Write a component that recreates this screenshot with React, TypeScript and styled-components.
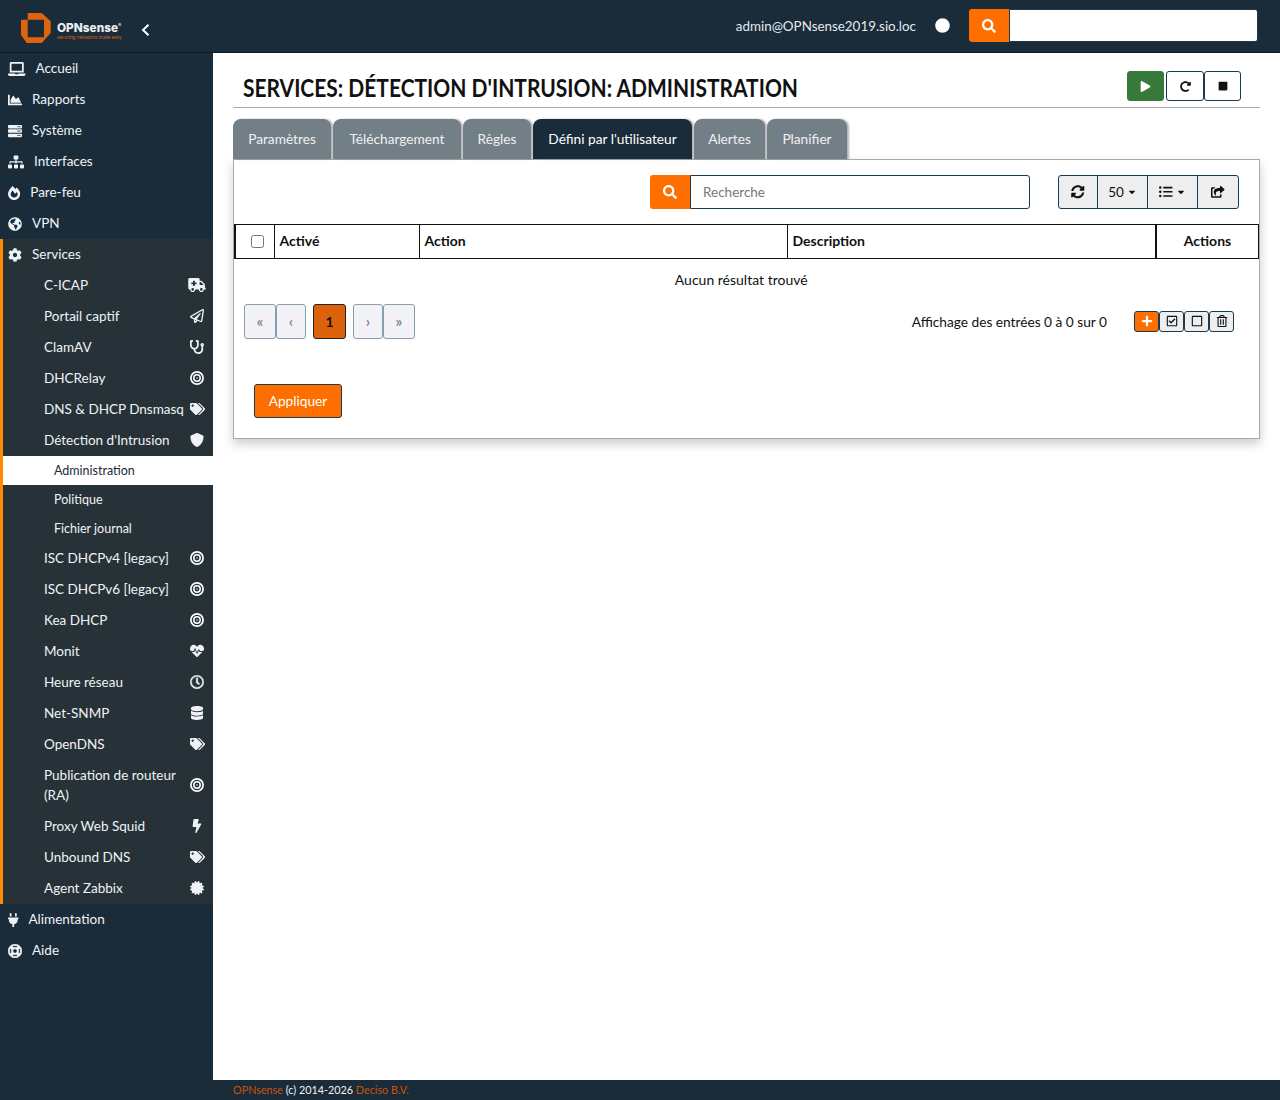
import React from "react";
import styled, { createGlobalStyle } from "styled-components";
import {
	FaLaptop,
	FaChartArea,
	FaServer,
	FaSitemap,
	FaFireAlt,
	FaGlobeAmericas,
	FaCog,
	FaAmbulance,
	FaRegPaperPlane,
	FaStethoscope,
	FaTags,
	FaHeartbeat,
	FaRegClock,
	FaDatabase,
	FaBolt,
	FaCertificate,
	FaPlug,
	FaRegLifeRing,
	FaSearch,
	FaPlay,
	FaRedoAlt,
	FaStop,
	FaSyncAlt,
	FaListUl,
	FaShareSquare,
	FaPlus,
	FaRegCheckSquare,
	FaRegSquare,
	FaRegTrashAlt,
	FaCaretDown,
	FaCircle,
} from "react-icons/fa";
import { FaShield } from "react-icons/fa6";

const FONT = `"Lato", "Noto Sans", sans-serif`;

const GlobalStyle = createGlobalStyle`
	* {
		box-sizing: border-box;
	}
	body {
		margin: 0;
		font-family: ${FONT};
		font-size: 14px;
		color: #111;
		background: #fff;
	}
`;

const Page = styled.div`
	height: 100vh;
	display: flex;
	flex-direction: column;
	overflow: hidden;
`;

const Header = styled.header`
	height: 53px;
	flex-shrink: 0;
	background: #1a2b3a;
	border-bottom: 1px solid #0f1a22;
	display: flex;
	align-items: center;
	padding: 0 22px 1px 21px;
`;

const Brand = styled.div`
	display: flex;
	align-items: center;
	width: 120px;
	padding-top: 4px;
`;

const Wordmark = styled.div`
	margin-left: 6px;
	display: flex;
	flex-direction: column;
	color: #e9edf0;
	font: 800 11.8px/11px "Inter", sans-serif;
	padding-top: 8px;

	sup {
		font-size: 5px;
		line-height: 0;
	}

	small {
		font: 400 5px/6px ${FONT};
		color: #d2610f;
		white-space: nowrap;
	}
`;

const CollapseIcon = styled.svg`
	margin-top: 8px;
`;

const UserBlock = styled.div`
	margin-left: auto;
	display: flex;
	align-items: center;
	color: #e4e9ec;
	font-size: 13.4px;
`;

const StatusDot = styled.span`
	display: flex;
	color: #fff;
	font-size: 15px;
	margin: 0 19px 0 19px;
`;

const SearchGroup = styled.div<{ $width: number; $top?: boolean }>`
	display: flex;
	width: ${(p) => p.$width}px;
	height: ${(p) => (p.$top ? 33 : 34)}px;
`;

const SearchAddon = styled.span`
	width: 40px;
	background: #ff6f00;
	color: #fff;
	border-radius: 3px 0 0 3px;
	display: flex;
	align-items: center;
	justify-content: center;
	font-size: 14px;
	flex-shrink: 0;
`;

const SearchInput = styled.input`
	flex: 1;
	min-width: 0;
	border: 1px solid #1a3a52;
	border-radius: 0 3px 3px 0;
	background: #fff;
	padding: 0 12px;
	font: 13.5px ${FONT};
	color: #333;

	&::placeholder {
		color: #777;
		opacity: 1;
	}
`;

const Body = styled.div`
	flex: 1;
	display: flex;
	min-height: 0;
`;

const Sidebar = styled.nav`
	width: 213px;
	flex-shrink: 0;
	background: #1a2b3a;
	color: #f0f3f5;
	font-size: 13.5px;
`;

const TopItem = styled.div`
	height: 31px;
	display: flex;
	align-items: center;
	padding: 0 0 2px 8px;
`;

const TopIcon = styled.span<{ $w: number }>`
	display: flex;
	margin: 2px 10px 0 0;

	svg {
		height: 14px;
		width: ${(p) => p.$w}px;
	}
`;

const OpenSection = styled.div`
	background: #263238;
	border-left: 3px solid #ff8c00;
`;

const OpenHead = styled(TopItem)`
	padding-left: 5px;
`;

const SubItem = styled.div`
	min-height: 31px;
	display: flex;
	align-items: center;
	justify-content: space-between;
	padding: 4.5px 6px 6.5px 41px;
	line-height: 20px;
`;

const SubLabel = styled.span`
	max-width: 146px;
`;

const SubIcon = styled.span<{ $w: number }>`
	width: 20px;
	display: flex;
	justify-content: center;
	flex-shrink: 0;
	margin-top: 1px;

	svg {
		height: 14px;
		width: ${(p) => p.$w}px;
		flex-shrink: 0;
	}
`;

const HeavyClock = styled(FaRegClock)`
	stroke-width: 16px;
`;

const HeavyRing = styled(FaRegLifeRing)`
	stroke-width: 28px;
`;

const LeafItem = styled.div<{ $active?: boolean }>`
	height: 29px;
	display: flex;
	align-items: center;
	padding: 0 0 1px 51px;
	font-size: 12.5px;
	background: ${(p) => (p.$active ? "#fff" : "transparent")};
	color: ${(p) => (p.$active ? "#1a2b3a" : "inherit")};

	&:first-of-type {
		height: 30px;
	}
`;

const Main = styled.div`
	flex: 1;
	min-width: 0;
	display: flex;
	flex-direction: column;
`;

const Content = styled.main`
	flex: 1;
	padding: 18px 20px 0;
`;

const TitleBar = styled.div`
	height: 37px;
	display: flex;
	align-items: flex-start;
	justify-content: space-between;
	border-bottom: 1px solid #aaa;
	padding: 0 19px 0 10px;
`;

const Title = styled.h1`
	margin: 3px 0 0;
	font: 700 24px/27px "Lato", sans-serif;
	color: #111;
	text-transform: uppercase;
	white-space: nowrap;
	transform: scaleX(0.874);
	transform-origin: left center;
`;

const ServiceButtons = styled.div`
	display: flex;
`;

const ServiceButton = styled.button<{ $play?: boolean; $w: number; $icon: number }>`
	width: ${(p) => p.$w}px;
	height: 30px;
	margin-right: ${(p) => (p.$play ? 2 : 0)}px;
	border-radius: 3px;
	border: 1px solid ${(p) => (p.$play ? "#377a3a" : "#1a3a52")};
	background: ${(p) => (p.$play ? "#377a3a" : "#fff")};
	color: ${(p) => (p.$play ? "#fff" : "#111")};
	display: flex;
	align-items: center;
	justify-content: center;
	font-size: ${(p) => p.$icon}px;
	padding: 0;
`;

const Tabs = styled.ul`
	list-style: none;
	margin: 11px 0 0;
	padding: 0;
	display: flex;
	gap: 2px;
	height: 41px;
`;

const Tab = styled.li<{ $active?: boolean; $width: number }>`
	width: ${(p) => p.$width}px;
	height: 40px;
	border-radius: 8px 8px 0 0;
	background: ${(p) => (p.$active ? "#1a2b3a" : "#737f86")};
	color: ${(p) => (p.$active ? "#fff" : "#eef1f3")};
	box-shadow: 2px 0 2px rgba(0, 0, 0, 0.3);
	display: flex;
	align-items: center;
	justify-content: center;
	padding-bottom: 2px;
	font-size: 13.7px;
	white-space: nowrap;
`;

const Panel = styled.section`
	height: 280px;
	margin-top: -1px;
	background: #fff;
	border: 1px solid #aaa;
	box-shadow: 0 5px 10px rgba(0, 0, 0, 0.2);
`;

const GridHeader = styled.div`
	height: 64px;
	display: flex;
	align-items: flex-start;
	padding: 15px 20px 0 416px;
	justify-content: space-between;
`;

const GridActions = styled.div`
	display: flex;
	height: 34px;
	border: 1px solid #1a3a52;
	border-radius: 3px;
	background: #eee;
`;

const GridAction = styled.span<{ $width: number }>`
	width: ${(p) => p.$width}px;
	display: flex;
	align-items: center;
	justify-content: center;
	gap: 3px;
	font-size: 13.5px;
	color: #111;

	& + & {
		border-left: 1px solid #1a3a52;
	}
`;

const Caret = styled(FaCaretDown)`
	font-size: 10px;
`;

const Table = styled.table`
	width: 1025px;
	border-collapse: collapse;
	table-layout: fixed;
`;

const HeadCell = styled.th<{ $width?: number; $center?: boolean }>`
	width: ${(p) => (p.$width ? `${p.$width}px` : "auto")};
	height: 34px;
	border: 1px solid #111;
	padding: 0 5px 3px;
	font-weight: 700;
	font-size: 14px;
	text-align: ${(p) => (p.$center ? "center" : "left")};

	&:first-child {
		border-left-width: 2px;
	}

	&:last-child {
		border-left-width: 2px;
	}
`;

const Check = styled.input`
	display: block;
	width: 13px;
	height: 13px;
	margin: 3px 0 0 10px;
`;

const EmptyCell = styled.td`
	height: 43px;
	text-align: center;
	padding: 0 11px 2px 0;
	vertical-align: middle;
`;

const FooterRow = styled.div`
	display: flex;
	align-items: flex-start;
	padding: 2px 25px 0 10px;
`;

const Pager = styled.div`
	display: flex;
	gap: 7px;
`;

const PagerGroup = styled.div`
	display: flex;
`;

const PagerCell = styled.span<{ $width: number; $current?: boolean }>`
	width: ${(p) => p.$width}px;
	height: 35px;
	border: 1px solid ${(p) => (p.$current ? "#222" : "#86a0ad")};
	border-radius: 3px;
	background: ${(p) => (p.$current ? "#db620b" : "#f3f3f7")};
	color: ${(p) => (p.$current ? "#111" : "#7d8a92")};
	font-weight: 700;
	font-size: ${(p) => (p.$current ? 14 : 15)}px;
	display: flex;
	align-items: center;
	justify-content: center;
`;

const EntriesInfo = styled.span`
	margin-left: auto;
	font-size: 13.7px;
	line-height: 35px;
`;

const RowActions = styled.div`
	display: flex;
	margin: 7px 0 0 27px;
`;

const RowAction = styled.span<{ $add?: boolean }>`
	width: 25px;
	height: 21px;
	border: 1px solid #1a3a52;
	border-radius: 3px;
	background: ${(p) => (p.$add ? "#ff6f00" : "#eee")};
	color: ${(p) => (p.$add ? "#fff" : "#111")};
	font-size: 12px;
	display: flex;
	align-items: center;
	justify-content: center;
`;

const ApplyRow = styled.div`
	padding: 45px 0 0 20px;
`;

const ApplyButton = styled.button`
	width: 88px;
	height: 34px;
	padding: 0;
	border: 1px solid #1a3a52;
	border-radius: 3px;
	background: #ff6f00;
	color: #fff;
	font: 13.7px ${FONT};
`;

const Footer = styled.footer`
	height: 20px;
	flex-shrink: 0;
	background: #1a2b3a;
	color: #f0f3f5;
	font-size: 10.8px;
	line-height: 20px;
	padding-left: 20px;

	span {
		color: #c9530c;
	}
`;

const Logo = () => (
	<svg width="30" height="30" viewBox="0 0 30 30">
		<path
			fillRule="evenodd"
			fill="#e0640c"
			d="M6.7 0H20.7L29.7 8.3V20L20.7 30H5.7L0 21.7V6.7H6.7ZM6.7 6.7V24.3H23V6.7Z"
		/>
	</svg>
);

const Chevron = () => (
	<CollapseIcon width="9" height="12" viewBox="0 0 9 12">
		<polyline
			points="7.5,0.8 2,6 7.5,11.2"
			fill="none"
			stroke="#fff"
			strokeWidth="2"
		/>
	</CollapseIcon>
);

const Bullseye = () => (
	<svg viewBox="0 0 14 14">
		<circle cx="7" cy="7" r="6.1" fill="none" stroke="#fff" strokeWidth="1.7" />
		<circle cx="7" cy="7" r="3.2" fill="none" stroke="#fff" strokeWidth="1.5" />
		<circle cx="7" cy="7" r="1" fill="#9aa4aa" />
	</svg>
);

type Node = { label: string; icon: React.ReactNode; w: number };

const topBefore: Node[] = [
	{ label: "Accueil", icon: <FaLaptop />, w: 17.5 },
	{ label: "Rapports", icon: <FaChartArea />, w: 14 },
	{ label: "Système", icon: <FaServer />, w: 14 },
	{ label: "Interfaces", icon: <FaSitemap />, w: 16 },
	{ label: "Pare-feu", icon: <FaFireAlt />, w: 12.25 },
	{ label: "VPN", icon: <FaGlobeAmericas />, w: 14 },
];

const subBefore: Node[] = [
	{ label: "C-ICAP", icon: <FaAmbulance />, w: 18 },
	{ label: "Portail captif", icon: <FaRegPaperPlane />, w: 14 },
	{ label: "ClamAV", icon: <FaStethoscope />, w: 14 },
	{ label: "DHCRelay", icon: <Bullseye />, w: 14 },
	{ label: "DNS & DHCP Dnsmasq", icon: <FaTags />, w: 15 },
	{ label: "Détection d'Intrusion", icon: <FaShield />, w: 14 },
];

const subAfter: Node[] = [
	{ label: "ISC DHCPv4 [legacy]", icon: <Bullseye />, w: 14 },
	{ label: "ISC DHCPv6 [legacy]", icon: <Bullseye />, w: 14 },
	{ label: "Kea DHCP", icon: <Bullseye />, w: 14 },
	{ label: "Monit", icon: <FaHeartbeat />, w: 14 },
	{ label: "Heure réseau", icon: <HeavyClock />, w: 14 },
	{ label: "Net-SNMP", icon: <FaDatabase />, w: 12.25 },
	{ label: "OpenDNS", icon: <FaTags />, w: 15 },
	{ label: "Publication de routeur (RA)", icon: <Bullseye />, w: 14 },
	{ label: "Proxy Web Squid", icon: <FaBolt />, w: 12 },
	{ label: "Unbound DNS", icon: <FaTags />, w: 15 },
	{ label: "Agent Zabbix", icon: <FaCertificate />, w: 14 },
];

const tabs = [
	{ label: "Paramètres", width: 98 },
	{ label: "Téléchargement", width: 128 },
	{ label: "Règles", width: 68 },
	{ label: "Défini par l'utilisateur", width: 159, active: true },
	{ label: "Alertes", width: 71 },
	{ label: "Planifier", width: 80 },
];

const renderTop = (n: Node) => (
	<TopItem key={n.label}>
		<TopIcon $w={n.w}>{n.icon}</TopIcon>
		{n.label}
	</TopItem>
);

const renderSub = (n: Node) => (
	<SubItem key={n.label}>
		<SubLabel>{n.label}</SubLabel>
		<SubIcon $w={n.w}>{n.icon}</SubIcon>
	</SubItem>
);

const App = () => {
	return (
		<Page>
			<GlobalStyle />
			<Header>
				<Brand>
					<Logo />
					<Wordmark>
						<span>
							OPNsense<sup>®</sup>
						</span>
						<small>securing networks made easy</small>
					</Wordmark>
				</Brand>
				<Chevron />
				<UserBlock>
					admin@OPNsense2019.sio.loc
					<StatusDot>
						<FaCircle />
					</StatusDot>
					<SearchGroup $width={289} $top>
						<SearchAddon>
							<FaSearch />
						</SearchAddon>
						<SearchInput aria-label="Recherche" />
					</SearchGroup>
				</UserBlock>
			</Header>
			<Body>
				<Sidebar>
					{topBefore.map(renderTop)}
					<OpenSection>
						<OpenHead>
							<TopIcon $w={14}>
								<FaCog />
							</TopIcon>
							Services
						</OpenHead>
						{subBefore.map(renderSub)}
						<LeafItem $active>Administration</LeafItem>
						<LeafItem>Politique</LeafItem>
						<LeafItem>Fichier journal</LeafItem>
						{subAfter.map(renderSub)}
					</OpenSection>
					{renderTop({ label: "Alimentation", icon: <FaPlug />, w: 10.5 })}
					{renderTop({ label: "Aide", icon: <HeavyRing />, w: 14 })}
				</Sidebar>
				<Main>
					<Content>
						<TitleBar>
							<Title>Services: Détection d'Intrusion: Administration</Title>
							<ServiceButtons>
								<ServiceButton $play $w={37} $icon={11}>
									<FaPlay />
								</ServiceButton>
								<ServiceButton $w={38} $icon={11}>
									<FaRedoAlt />
								</ServiceButton>
								<ServiceButton $w={37} $icon={10}>
									<FaStop />
								</ServiceButton>
							</ServiceButtons>
						</TitleBar>
						<Tabs>
							{tabs.map((t) => (
								<Tab key={t.label} $width={t.width} $active={t.active}>
									{t.label}
								</Tab>
							))}
						</Tabs>
						<Panel>
							<GridHeader>
								<SearchGroup $width={380}>
									<SearchAddon>
										<FaSearch />
									</SearchAddon>
									<SearchInput placeholder="Recherche" />
								</SearchGroup>
								<GridActions>
									<GridAction $width={38}>
										<FaSyncAlt />
									</GridAction>
									<GridAction $width={50}>
										50
										<Caret />
									</GridAction>
									<GridAction $width={50}>
										<FaListUl />
										<Caret />
									</GridAction>
									<GridAction $width={41}>
										<FaShareSquare />
									</GridAction>
								</GridActions>
							</GridHeader>
							<Table>
								<thead>
									<tr>
										<HeadCell $width={39}>
											<Check type="checkbox" />
										</HeadCell>
										<HeadCell $width={145}>Activé</HeadCell>
										<HeadCell $width={368}>Action</HeadCell>
										<HeadCell $width={369}>Description</HeadCell>
										<HeadCell $center>Actions</HeadCell>
									</tr>
								</thead>
								<tbody>
									<tr>
										<EmptyCell colSpan={5}>Aucun résultat trouvé</EmptyCell>
									</tr>
								</tbody>
							</Table>
							<FooterRow>
								<Pager>
									<PagerGroup>
										<PagerCell $width={32}>«</PagerCell>
										<PagerCell $width={30}>‹</PagerCell>
									</PagerGroup>
									<PagerCell $width={33} $current>
										1
									</PagerCell>
									<PagerGroup>
										<PagerCell $width={30}>›</PagerCell>
										<PagerCell $width={32}>»</PagerCell>
									</PagerGroup>
								</Pager>
								<EntriesInfo>Affichage des entrées 0 à 0 sur 0</EntriesInfo>
								<RowActions>
									<RowAction $add>
										<FaPlus />
									</RowAction>
									<RowAction>
										<FaRegCheckSquare />
									</RowAction>
									<RowAction>
										<FaRegSquare />
									</RowAction>
									<RowAction>
										<FaRegTrashAlt />
									</RowAction>
								</RowActions>
							</FooterRow>
							<ApplyRow>
								<ApplyButton>Appliquer</ApplyButton>
							</ApplyRow>
						</Panel>
					</Content>
					<Footer>
						<span>OPNsense</span> (c) 2014-2026 <span>Deciso B.V.</span>
					</Footer>
				</Main>
			</Body>
		</Page>
	);
};

export default App;
